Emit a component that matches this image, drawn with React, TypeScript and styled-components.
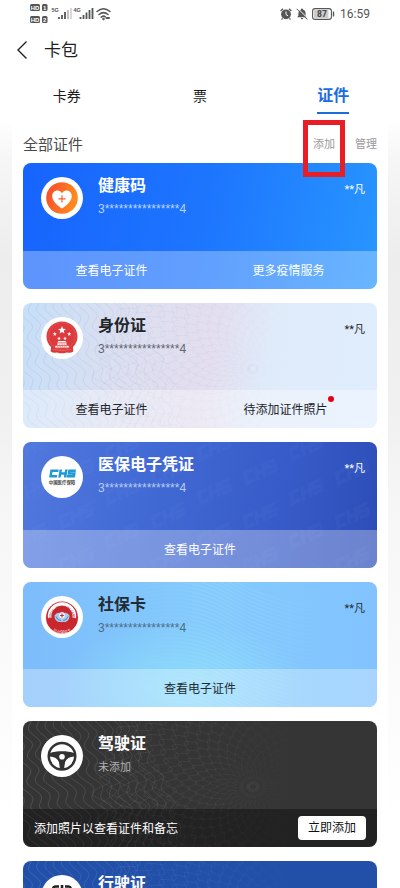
import React from 'react';
import styled, { createGlobalStyle } from 'styled-components';

const GlobalStyle = createGlobalStyle`
  * { box-sizing: border-box; }
  body {
    margin: 0;
    background: #fff;
    color: #1f1f1f;
    font-family: Roboto, 'Noto Sans CJK SC', sans-serif;
  }
  button {
    margin: 0;
    padding: 0;
    border: 0;
    background: none;
    color: inherit;
    font: inherit;
    cursor: pointer;
  }
  h1, h2, h3, p { margin: 0; font-weight: 400; }
`;

/* ---------- Layout ---------- */

const Screen = styled.div`
  display: flex;
  flex-direction: column;
  height: 100vh;
  overflow: hidden;
  background: #fff;
`;

const StatusBar = styled.div`
  display: flex;
  justify-content: space-between;
  align-items: center;
  height: 28px;
  padding: 0 30px;
  color: #555;
`;

const StatusGroup = styled.div`
  display: flex;
  align-items: center;
  gap: 4px;
`;

const Clock = styled.time`
  margin-left: 1px;
  font-size: 12px;
  line-height: 16px;
`;

const NavBar = styled.header`
  display: flex;
  align-items: center;
  gap: 13px;
  height: 44px;
  padding: 0 15px;
`;

const BackButton = styled.button`
  display: flex;
  width: 16px;
  height: 24px;
  align-items: center;
`;

const NavTitle = styled.h1`
  font-size: 17px;
  line-height: 24px;
`;

const Tabs = styled.nav`
  display: grid;
  flex: none;
  grid-template-columns: repeat(3, 1fr);
  height: 48px;
`;

const Tab = styled.button<{ $active?: boolean }>`
  display: flex;
  justify-content: center;
  align-items: center;
  color: ${(p) => (p.$active ? '#1b6dde' : '#1a1a1a')};
  font-size: ${(p) => (p.$active ? 16 : 14)}px;
  font-weight: ${(p) => (p.$active ? 700 : 400)};

  span {
    padding: 5px 0 4px;
    line-height: 24px;
    border-bottom: 2px solid ${(p) => (p.$active ? '#1b6dde' : 'transparent')};
  }
`;

const Scroller = styled.main`
  flex: 1;
  min-height: 0;
  padding: 0 12px;
  overflow-y: auto;
  scrollbar-width: none;
  background: linear-gradient(#fff 0, #f6f6f6 5%, #ededed 18%, #f0f0f0 38%, #f6f6f6 50%, #fafafa 70%, #fff 92%);
`;

const Panel = styled.section`
  padding: 7px 11px 24px;
  background: #fff;
`;

const PanelHead = styled.div`
  display: flex;
  align-items: center;
  justify-content: space-between;
  height: 36px;
  padding-bottom: 1px;
`;

const PanelTitle = styled.h2`
  color: #4a4a4a;
  font-size: 15px;
  line-height: 20px;
`;

const PanelActions = styled.div`
  display: flex;
  gap: 20px;
`;

const TextAction = styled.button<{ $marked?: boolean }>`
  position: relative;
  color: #999;
  font-size: 11px;
  line-height: 16px;

  &::after {
    content: '';
    display: ${(p) => (p.$marked ? 'block' : 'none')};
    position: absolute;
    z-index: 2;
    inset: -17px -10px -24px;
    border: 5px solid #e81e26;
    pointer-events: none;
  }
`;

const CardList = styled.ul`
  display: flex;
  flex-direction: column;
  gap: 14px;
  margin: 0;
  padding: 0;
  list-style: none;
`;

/* ---------- Card ---------- */

const CardShell = styled.li<{ $bg: string; $ink: string }>`
  position: relative;
  display: flex;
  flex-direction: column;
  aspect-ratio: 31 / 11;
  overflow: hidden;
  border-radius: 8px;
  background: ${(p) => p.$bg};
  color: ${(p) => p.$ink};
`;

const Decor = styled.svg`
  position: absolute;
  inset: 0;
  width: 100%;
  height: 100%;
`;

const CardBody = styled.div`
  position: relative;
  display: flex;
  flex: 1;
  gap: 15px;
  padding: 14px 12px 0 18px;
`;

const Badge = styled.svg`
  flex: none;
  width: 42px;
  height: 42px;
`;

const CardText = styled.div`
  flex: 1;
  margin-top: -3px;
`;

const CardTitle = styled.h3`
  font-size: 16px;
  font-weight: 700;
  line-height: 24px;
`;

const CardNumber = styled.p<{ $tone: string }>`
  color: ${(p) => p.$tone};
  font-family: 'Liberation Sans', 'Noto Sans CJK SC', sans-serif;
  font-size: 12px;
  line-height: 22px;
`;

const CardHint = styled(CardNumber)`
  font-size: 11px;
`;

const Owner = styled.p`
  margin-top: 4px;
  font-size: 11px;
  line-height: 18px;
`;

const CardFoot = styled.div<{ $bg: string }>`
  position: relative;
  display: flex;
  height: 38px;
  align-items: center;
  background: ${(p) => p.$bg};
  font-size: 12px;
  line-height: 18px;
`;

const FootAction = styled.button`
  flex: 1;
  height: 100%;
  padding-top: 2px;
`;

const Noticed = styled.span`
  position: relative;
  padding-right: 6px;

  &::after {
    content: '';
    position: absolute;
    top: -7px;
    right: 0;
    width: 6px;
    height: 6px;
    border-radius: 50%;
    background: #e60012;
  }
`;

const FootNote = styled.p`
  flex: 1;
  padding: 2px 0 0 11px;
`;

const AddButton = styled.button`
  height: 24px;
  margin-right: 11px;
  padding: 0 10px;
  border-radius: 4px;
  background: #fff;
  color: #111;
`;

/* ---------- Engraved backgrounds ---------- */

const wavePaths = Array.from({ length: 20 }, (_, i) => {
  const x0 = -60 + i * 9;
  let d = '';
  for (let y = -4; y <= 130; y += 2) {
    const x = x0 + y * 0.42 + 4 * Math.sin(y / 4 + i * 0.35) + 3 * Math.sin(y / 17 + i * 0.2);
    d += `${d ? 'L' : 'M'}${x.toFixed(1)} ${y}`;
  }
  return d;
});

const rosettePaths = Array.from({ length: 22 }, (_, i) => {
  const r = 5 + i * 7;
  let d = '';
  for (let a = 0; a <= 360; a += 2) {
    const t = (a * Math.PI) / 180;
    const w = r + (2 + r * 0.05) * Math.sin(t * 30 + (i % 2) * Math.PI + i * 0.3);
    d += `${d ? 'L' : 'M'}${(230 + w * Math.cos(t)).toFixed(1)} ${(66 + w * 0.82 * Math.sin(t)).toFixed(1)}`;
  }
  return `${d}Z`;
});

const Guilloche = ({ id, color, strength }: { id: string; color: string; strength: number }) => (
  <Decor viewBox="0 0 354 126" preserveAspectRatio="xMidYMid slice" aria-hidden="true">
    <defs>
      <linearGradient id={id} gradientUnits="userSpaceOnUse" x1="0" y1="0" x2="354" y2="0">
        <stop offset="0" stopColor={color} stopOpacity={strength} />
        <stop offset=".5" stopColor={color} stopOpacity={strength * 0.5} />
        <stop offset=".78" stopColor={color} stopOpacity="0" />
      </linearGradient>
    </defs>
    <g fill="none" stroke={`url(#${id})`} strokeWidth=".6">
      {wavePaths.map((d) => <path key={d} d={d} />)}
      {rosettePaths.map((d) => <path key={d} d={d} strokeWidth=".4" />)}
    </g>
  </Decor>
);

const ChsPattern = () => (
  <Decor viewBox="0 0 354 126" preserveAspectRatio="xMidYMid slice" aria-hidden="true">
    <g fill="none" stroke="#9bb8ff" strokeOpacity=".045" strokeWidth="4">
      {[-10, 36, 82, 128, 174, 220, 266, 312].flatMap((x, i) =>
        [8, 52, 96, 140].map((y) => (
          <path
            key={`${x}-${y}`}
            transform={`translate(${x} ${y - (i % 2) * 20}) rotate(-24) skewX(-14)`}
            d="M11 0H2V10H11M14 -2V12M14 5H22M22 -2V12M35 0H26V5H34V10H25"
          />
        )),
      )}
    </g>
  </Decor>
);

const Ripples = () => (
  <Decor viewBox="0 0 354 126" preserveAspectRatio="xMidYMid slice" aria-hidden="true">
    <defs>
      <linearGradient id="ripple-fade" gradientUnits="userSpaceOnUse" x1="110" y1="0" x2="300" y2="0">
        <stop offset="0" stopColor="#d2f4ff" stopOpacity="0" />
        <stop offset=".5" stopColor="#d2f4ff" stopOpacity=".25" />
        <stop offset="1" stopColor="#d2f4ff" stopOpacity="0" />
      </linearGradient>
    </defs>
    <g fill="none" stroke="url(#ripple-fade)" strokeWidth=".6">
      {Array.from({ length: 36 }, (_, i) => (
        <path key={i} d={`M110 ${-14 + i * 4}Q160 ${-30 + i * 4} 205 ${-4 + i * 4}T300 ${26 + i * 4}`} />
      ))}
    </g>
  </Decor>
);

/* ---------- Badges ---------- */

const HealthBadge = () => (
  <Badge viewBox="0 0 42 42" aria-hidden="true">
    <defs>
      <linearGradient id="health" x1="0" y1="0" x2="1" y2="0.3">
        <stop offset="0" stopColor="#f5492a" />
        <stop offset="1" stopColor="#ff8a1f" />
      </linearGradient>
    </defs>
    <circle cx="21" cy="21" r="21" fill="#fff" />
    <circle cx="21" cy="21" r="15.8" fill="url(#health)" />
    <path d="M21 31.5C18 29.5 11.2 24.8 11.2 19.2C11.2 15.8 13.5 13.5 16.3 13.5C18.5 13.5 20.1 14.7 21 16.3C21.9 14.7 23.5 13.5 25.7 13.5C28.5 13.5 30.8 15.8 30.8 19.2C30.8 24.8 24 29.5 21 31.5Z" fill="#fff" />
    <path d="M21 18.2V25.4M17.4 21.8H24.6" stroke="#f9622a" strokeWidth="1.2" />
  </Badge>
);

const star = (cx: number, cy: number, r: number) =>
  Array.from({ length: 10 }, (_, i) => {
    const a = (Math.PI / 5) * i - Math.PI / 2;
    const k = i % 2 ? r * 0.42 : r;
    return `${(cx + k * Math.cos(a)).toFixed(2)},${(cy + k * Math.sin(a)).toFixed(2)}`;
  }).join(' ');

const EmblemBadge = () => (
  <Badge viewBox="0 0 42 42" aria-hidden="true">
    <circle cx="21" cy="21" r="21" fill="#fff" />
    <path d="M21 4.5C29.5 4.5 36.5 11 36.5 19.5C36.5 24 34.5 27.5 32 30L32.3 34.5Q29.5 36.5 26 35.5L23 36.2H19L16 35.5Q12.5 36.5 9.7 34.5L10 30C7.5 27.5 5.5 24 5.5 19.5C5.5 11 12.5 4.5 21 4.5Z" fill="#dc3a3c" />
    <circle cx="21" cy="19" r="13.4" fill="none" stroke="#e9605a" strokeWidth=".5" />
    <g fill="#fff">
      <polygon points={star(21, 13.2, 4.2)} />
      <polygon points={star(13.8, 17, 2.2)} />
      <polygon points={star(28.2, 17, 2.2)} />
      <polygon points={star(18, 21.5, 2)} />
      <polygon points={star(24, 21.5, 2)} />
      <path d="M17.5 24H24.5L25.8 25.6H16.2ZM16.5 26.3H25.5V28H16.5ZM14.5 28.7H27.5L28 30.6H14Z" />
    </g>
    <path d="M18 27.2H24M16 29.6H26" stroke="#dc3a3c" strokeWidth=".5" strokeDasharray="1.5 .8" />
    <path d="M12 32.5Q21 34.5 30 32.5" fill="none" stroke="#ee837c" strokeWidth=".5" />
  </Badge>
);

const ChsBadge = () => (
  <Badge viewBox="0 0 42 42" aria-hidden="true">
    <circle cx="21" cy="21" r="21" fill="#fff" />
    <g fill="none" stroke="#1f9bd2" strokeWidth="2.5" transform="translate(3.600 0) skewX(-10)">
      <path d="M16.5 14.8H9.5V20.2H16M18.6 13.6V21.4M18.6 17.5H24.2M24.2 13.6V21.4M33.8 14.8H27.4V17.5H32.8V20.2H25.8" />
    </g>
    <text x="21" y="27.5" textAnchor="middle" fontSize="4.400" fontWeight="700" fill="#444" fontFamily="'Noto Sans CJK SC', sans-serif">中国医疗保障</text>
  </Badge>
);

const SocialBadge = () => (
  <Badge viewBox="0 0 42 42" aria-hidden="true">
    <defs>
      <path id="social-top" d="M9.8 22.5A11.2 11.2 0 1 1 32.2 22.5" />
      <path id="social-bottom" d="M7 24A14 14 0 0 0 35 24" />
    </defs>
    <circle cx="21" cy="21" r="21" fill="#fff" />
    <circle cx="21" cy="21.5" r="16" fill="#c9262e" />
    <path d="M8.7 22A12.4 12.4 0 1 1 33.3 22" fill="none" stroke="#fff" strokeWidth="3.600" />
    <text fontSize="2.800" fontWeight="700" fill="#b5303a" fontFamily="'Liberation Sans', sans-serif">
      <textPath href="#social-top" startOffset="50%" textAnchor="middle">SOCIAL SECURITY CARD</textPath>
    </text>
    <path d="M13.5 19.5Q16 16 18.5 17Q21 14.5 23.5 17Q26 16 28.5 19.5Q28.5 24.5 24.5 26H17.5Q13.5 24.5 13.5 19.5Z" fill="#a8cdec" />
    <path d="M15 20.5Q16 24.5 20 24.5M27 20.5Q26 24.5 22 24.5" fill="none" stroke="#4c86c0" strokeWidth="1" />
    <circle cx="21" cy="19.5" r="2.7" fill="#fff" />
    <path d="M21 17.6V21.4M19.1 19.5H22.9" stroke="#d5272d" strokeWidth="1.200" />
    <text fontSize="4" fill="#ffd9d6" fontFamily="'Noto Sans CJK SC', sans-serif">
      <textPath href="#social-bottom" startOffset="50%" textAnchor="middle">社会保障卡</textPath>
    </text>
  </Badge>
);

const WheelBadge = () => (
  <Badge viewBox="0 0 42 42" aria-hidden="true">
    <circle cx="21" cy="21" r="21" fill="#fff" />
    <circle cx="21" cy="21.2" r="13.3" fill="none" stroke="#333" strokeWidth="2.500" />
    <path d="M8.5 18.2C12 16.8 16.500 16.200 21 16.200S30 16.800 33.500 18.200V21.500C28.500 21.800 25.500 23.600 24.100 27L23 34H19L17.900 27C16.500 23.600 13.500 21.800 8.500 21.500Z" fill="#333" />
    <circle cx="21" cy="21.8" r="2.8" fill="#fff" />
  </Badge>
);

const VehicleBadge = () => (
  <Badge viewBox="0 0 42 42" aria-hidden="true">
    <circle cx="21" cy="21" r="21" fill="#fff" />
    <path d="M18 11.5H14.500Q12.500 11.500 12 14L11 20H31L30 14Q29.500 11.500 27.500 11.500H24M21 10V20" fill="none" stroke="#222" strokeWidth="2.600" />
    <rect x="8" y="20" width="26" height="9" rx="2" fill="#222" />
    <path d="M12 29V32M30 29V32" stroke="#222" strokeWidth="3" />
  </Badge>
);

/* ---------- Status icons ---------- */

const SignalIcons = () => (
  <svg width="82" height="24" viewBox="0 0 82 24" role="img" aria-label="HD 5G 4G Wi-Fi">
    {[2, 14].map((y, i) => (
      <g key={y}>
        <rect x="0" y={y} width="10" height="7" rx="1.500" fill="#555" />
        <rect x="12" y={y} width="5.500" height="7" rx="1.500" fill="#555" />
        <g fill="#fff" fontFamily="'Liberation Sans', sans-serif" fontWeight="700" fontSize="6" textAnchor="middle">
          <text x="5" y={y + 5.7}>HD</text>
          <text x="14.7" y={y + 5.7}>{i + 1}</text>
        </g>
      </g>
    ))}
    <g fill="#555" fontFamily="'Liberation Sans', sans-serif" fontWeight="700" fontSize="5.500">
      <text x="21.500" y="10">5G</text>
      <text x="43.500" y="10">4G</text>
    </g>
    <g strokeWidth="1.800" stroke="#555">
      <path d="M29 17V15M32 17V13M35 17V10" />
      <path d="M38 17V8" stroke="#bbb" />
      <path d="M41 17V6" stroke="#d5d5d5" />
      <path d="M50.500 17V15M53.500 17V13M56.500 17V10.500M59.500 17V8M62.500 17V6" />
    </g>
    <g fill="none" stroke="#555" strokeWidth="1.500" strokeLinecap="round">
      <path d="M67 9.500Q73.500 4 80 9.500M69 12.500Q73.500 8.800 78 12.500M71.200 15.200Q73.500 13.300 75.300 14.800" />
      <path d="M76.500 16H79" strokeWidth="2" />
      <circle cx="73.500" cy="17" r=".5" fill="#555" />
    </g>
  </svg>
);

const AlarmIcon = () => (
  <svg width="12" height="12" viewBox="0 0 12 12" role="img" aria-label="闹钟">
    <circle cx="6" cy="6.300" r="4.900" fill="#555" />
    <path d="M.6 3L3 .8M11.400 3L9 .8M2.600 10.300L1.500 11.600M9.400 10.300L10.500 11.600" stroke="#555" strokeWidth="1.200" />
    <path d="M6 3.500V6.500L8 7.800" fill="none" stroke="#fff" strokeWidth="1" />
  </svg>
);

const MuteIcon = () => (
  <svg width="12" height="12" viewBox="0 0 12 12" role="img" aria-label="静音">
    <path d="M6 .6Q6.900 .6 7 1.600Q9.600 2.400 9.600 5.200V7.500L10.800 9.200H1.200L2.400 7.500V5.200Q2.400 2.400 5 1.600Q5.100 .6 6 .6ZM4.700 10H7.300Q7 11.300 6 11.300T4.700 10Z" fill="#555" />
    <path d="M1.600 .2L12 10.600" stroke="#fff" strokeWidth="1" />
    <path d="M.7 .8L11.400 11.500" stroke="#555" strokeWidth="1" />
  </svg>
);

const BatteryIcon = () => (
  <svg width="23" height="12" viewBox="0 0 23 12" role="img" aria-label="电量 87%">
    <rect x=".6" y=".6" width="18.800" height="10.800" rx="2.500" fill="#fff" stroke="#555" strokeWidth="1.100" />
    <rect x="2" y="2" width="14.500" height="8" rx="1" fill="#ccc" />
    <path d="M21.500 3.500V8.500" stroke="#555" strokeWidth="1.400" />
    <text x="10" y="9" textAnchor="middle" fontSize="8.500" fontWeight="700" fill="#444" fontFamily="Roboto, sans-serif">87</text>
  </svg>
);

/* ---------- Data ---------- */

type Credential = {
  title: string;
  bg: string;
  foot: string;
  ink: string;
  tone: string;
  badge: React.ReactNode;
  decor?: React.ReactNode;
  owned: boolean;
  actions: { label: string; notice?: boolean }[];
};

const MASKED_ID = `3${'*'.repeat(16)}4`;

const credentials: Credential[] = [
  {
    title: '健康码',
    bg: 'linear-gradient(100deg, #1764fd, #1d75fe 50%, #2896ff)',
    foot: 'rgba(255, 255, 255, 0.3)',
    ink: '#fff',
    tone: '#b9d4ff',
    badge: <HealthBadge />,
    owned: true,
    actions: [{ label: '查看电子证件' }, { label: '更多疫情服务' }],
  },
  {
    title: '身份证',
    bg: 'linear-gradient(100deg, #c6dff8, #dcdff0 28%, #e4deee 52%, #e0ebfa 68%, #dfedfd)',
    foot: 'rgba(255, 255, 255, 0.35)',
    ink: '#222428',
    tone: '#60656e',
    badge: <EmblemBadge />,
    decor: <Guilloche id="id-lines" color="#8fa6d0" strength={0.4} />,
    owned: true,
    actions: [{ label: '查看电子证件' }, { label: '待添加证件照片', notice: true }],
  },
  {
    title: '医保电子凭证',
    bg: 'linear-gradient(100deg, #5078de, #4068d3 40%, #375bc8 72%, #2c4db7)',
    foot: 'rgba(255, 255, 255, 0.3)',
    ink: '#fff',
    tone: '#bccbf3',
    badge: <ChsBadge />,
    decor: <ChsPattern />,
    owned: true,
    actions: [{ label: '查看电子证件' }],
  },
  {
    title: '社保卡',
    bg: 'radial-gradient(ellipse at 45% 85%, #8ddcfb, rgba(141, 220, 251, 0) 45%), linear-gradient(90deg, #7dbcfb, #84cbfc 50%, #82c3ff)',
    foot: 'rgba(255, 255, 255, 0.3)',
    ink: '#222b33',
    tone: '#4c6b86',
    badge: <SocialBadge />,
    decor: <Ripples />,
    owned: true,
    actions: [{ label: '查看电子证件' }],
  },
  {
    title: '驾驶证',
    bg: '#353535',
    foot: 'rgba(0, 0, 0, 0.35)',
    ink: '#fff',
    tone: '#b0b0b0',
    badge: <WheelBadge />,
    decor: <Guilloche id="driver-lines" color="#8a8a8a" strength={0.5} />,
    owned: false,
    actions: [],
  },
  {
    title: '行驶证',
    bg: '#2250a8',
    foot: 'rgba(0, 0, 0, 0.35)',
    ink: '#fff',
    tone: '#b7c7e6',
    badge: <VehicleBadge />,
    decor: <Guilloche id="vehicle-lines" color="#7fa4e6" strength={0.4} />,
    owned: false,
    actions: [],
  },
];

const CredentialCard = ({ item }: { item: Credential }) => (
  <CardShell $bg={item.bg} $ink={item.ink}>
    {item.decor}
    <CardBody>
      {item.badge}
      <CardText>
        <CardTitle>{item.title}</CardTitle>
        {item.owned ? (
          <CardNumber $tone={item.tone}>{MASKED_ID}</CardNumber>
        ) : (
          <CardHint $tone={item.tone}>未添加</CardHint>
        )}
      </CardText>
      {item.owned && <Owner>**凡</Owner>}
    </CardBody>
    <CardFoot $bg={item.foot}>
      {item.owned ? (
        item.actions.map((a) => (
          <FootAction key={a.label} type="button">
            {a.notice ? <Noticed>{a.label}</Noticed> : a.label}
          </FootAction>
        ))
      ) : (
        <>
          <FootNote>添加照片以查看证件和备忘</FootNote>
          <AddButton type="button">立即添加</AddButton>
        </>
      )}
    </CardFoot>
  </CardShell>
);

export default function App() {
  return (
    <Screen>
      <GlobalStyle />
      <StatusBar>
        <SignalIcons />
        <StatusGroup>
          <AlarmIcon />
          <MuteIcon />
          <BatteryIcon />
          <Clock>16:59</Clock>
        </StatusGroup>
      </StatusBar>
      <NavBar>
        <BackButton type="button" aria-label="返回">
          <svg width="14" height="20" viewBox="0 0 14 20" fill="none" stroke="#222" strokeWidth="1.400">
            <path d="M11.500 1.500L3 10L11.500 18.500" />
          </svg>
        </BackButton>
        <NavTitle>卡包</NavTitle>
      </NavBar>
      <Tabs>
        <Tab type="button"><span>卡券</span></Tab>
        <Tab type="button"><span>票</span></Tab>
        <Tab type="button" $active aria-current="page"><span>证件</span></Tab>
      </Tabs>
      <Scroller>
        <Panel>
          <PanelHead>
            <PanelTitle>全部证件</PanelTitle>
            <PanelActions>
              <TextAction type="button" $marked>添加</TextAction>
              <TextAction type="button">管理</TextAction>
            </PanelActions>
          </PanelHead>
          <CardList>
            {credentials.map((item) => (
              <CredentialCard key={item.title} item={item} />
            ))}
          </CardList>
        </Panel>
      </Scroller>
    </Screen>
  );
}
